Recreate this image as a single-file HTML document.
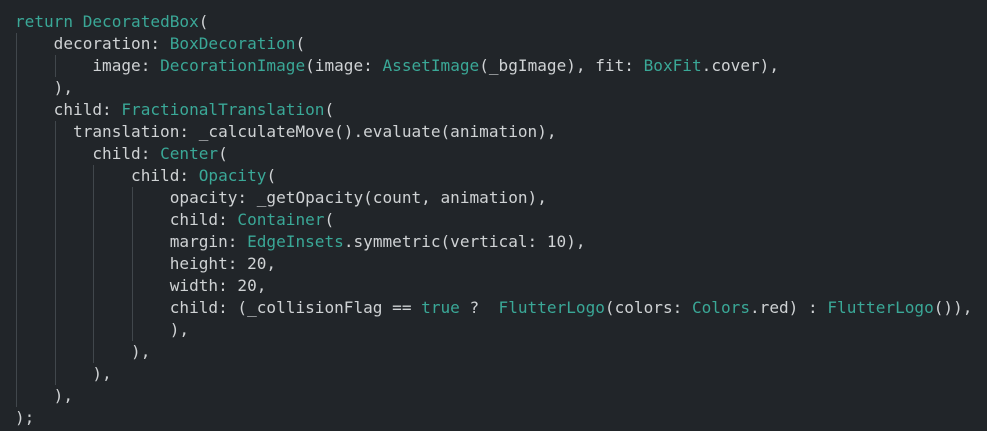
<!DOCTYPE html>
<html><head><meta charset="utf-8"><style>
html,body{margin:0;padding:0;background:#212529;width:987px;height:431px;overflow:hidden}
.c{position:absolute;left:15px;top:11px;font-family:"DejaVu Sans Mono","Liberation Mono",monospace;font-size:16.07px;line-height:22px;color:#cfd2d4;white-space:pre}
.l{position:relative;height:22px}
.t{color:#3aa897}
.g{position:absolute;top:0;height:22px;width:1px;background:#41474c}
</style></head><body><div class="c" id="c"></div>
<script>
var L=[
[0,'<t>return</t> <t>DecoratedBox</t>('],
[4,'decoration: <t>BoxDecoration</t>('],
[8,'image: <t>DecorationImage</t>(image: <t>AssetImage</t>(_bgImage), fit: <t>BoxFit</t>.cover),'],
[4,'),'],
[4,'child: <t>FractionalTranslation</t>('],
[6,'translation: _calculateMove().evaluate(animation),'],
[8,'child: <t>Center</t>('],
[12,'child: <t>Opacity</t>('],
[16,'opacity: _getOpacity(count, animation),'],
[16,'child: <t>Container</t>('],
[16,'margin: <t>EdgeInsets</t>.symmetric(vertical: 10),'],
[16,'height: 20,'],
[16,'width: 20,'],
[16,'child: (_collisionFlag == <t>true</t> ?  <t>FlutterLogo</t>(colors: <t>Colors</t>.red) : <t>FlutterLogo</t>()),'],
[16,'),'],
[12,'),'],
[8,'),'],
[4,'),'],
[0,');']];
var cw=16.07*0.602,h='';
L.forEach(function(x){var s='<div class="l">';
for(var k=0;k<x[0];k+=4)s+='<span class="g" style="left:'+(k*cw+1)+'px"></span>';
s+=' '.repeat(x[0])+x[1].replace(/<t>/g,'<span class="t">').replace(/<\/t>/g,'</span>')+'</div>';h+=s;});
document.getElementById('c').innerHTML=h;
</script></body></html>
